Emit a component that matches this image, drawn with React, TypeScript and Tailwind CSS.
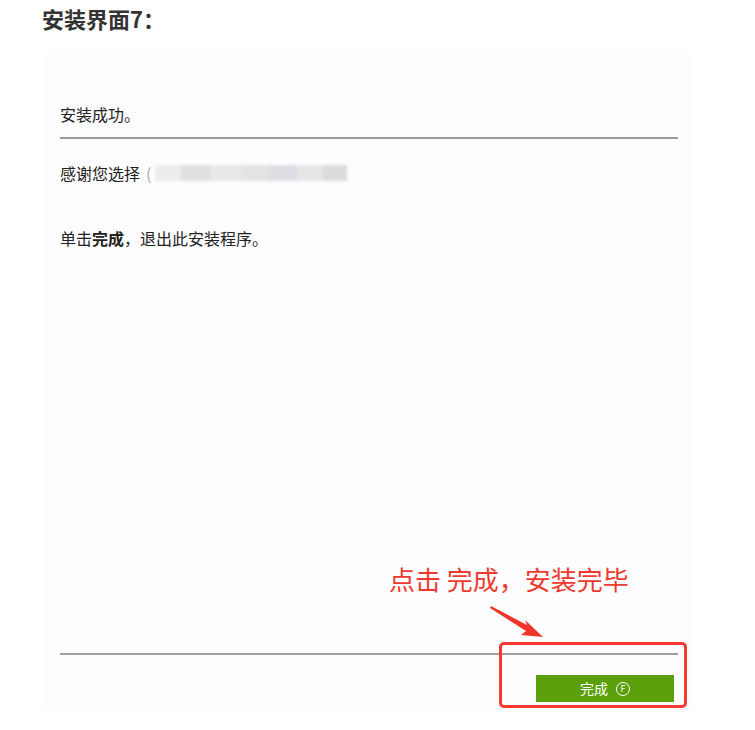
import React from 'react';

const cjk = { fontFamily: '"Noto Sans CJK SC", "Noto Sans", sans-serif' };

// ── Blurred product name (masked in screenshot) ─────────────────────────────
function BlurredName() {
  const blocks = [
    { w: 26, c: '#ededed' },
    { w: 30, c: '#e0e0e0' },
    { w: 30, c: '#e8e8e8' },
    { w: 28, c: '#e3e3e3' },
    { w: 28, c: '#dddde3' },
    { w: 26, c: '#e6e6e6' },
    { w: 24, c: '#dcdcdc' },
  ];
  return (
    <span className="inline-flex h-[16px] items-stretch blur-[1.5px] ml-[4px]">
      {blocks.map((b, i) => (
        <span key={i} style={{ width: b.w, backgroundColor: b.c }} />
      ))}
    </span>
  );
}

export default function App() {
  return (
    <div className="w-[755px] h-[730px] bg-white relative overflow-hidden" style={cjk}>
      {/* Title */}
      <h2 className="pl-[42px] pt-[3px] h-[52px] text-[22px] leading-[30px] font-bold text-[#333]">
        安装界面7：
      </h2>

      {/* Installer screenshot panel */}
      <div className="ml-[43px] w-[650px] h-[658px] bg-[#fdfcfe] flex flex-col pl-[17px] pr-[15px] pt-[51px] pb-[8px] text-[#222]">
        <p className="text-[16px] leading-[22px]">安装成功。</p>
        <div className="mt-[12px] h-[2px] bg-[#9a9a9a]" />

        <p className="mt-[23px] text-[16px] leading-[22px] flex items-center">
          感谢您选择 <span className="text-[#aaa] ml-[6px]">(</span>
          <BlurredName />
        </p>

        <p className="mt-[43px] text-[16px] leading-[22px]">
          单击<b className="font-bold">完成</b>，退出此安装程序。
        </p>

        <div className="flex-1" />

        <div className="h-[2px] bg-[#a0a0a0]" />
        <div className="mt-[20px] flex justify-end pr-[4px]">
          <button className="w-[138px] h-[27px] bg-[#5b9f0b] text-white text-[14px] flex items-center justify-center gap-[8px]">
            完成
            <span className="w-[14px] h-[14px] rounded-full border border-white text-[9px] leading-none flex items-center justify-center">
              F
            </span>
          </button>
        </div>
      </div>

      {/* Annotation overlays */}
      <div className="absolute left-[389px] top-[561px] text-[26px] leading-[36px] text-[#ee3a2e] whitespace-nowrap">
        点击 完成，安装完毕
      </div>

      <svg className="absolute left-[485px] top-[600px]" width="65" height="42" viewBox="0 0 65 42">
        <polygon points="6,6 42,25 40,20 58,37 36,35 41,31 5,8" fill="#f2352b" />
      </svg>

      <div className="absolute left-[499px] top-[642px] w-[188px] h-[66px] border-[3px] border-[#f23a30] rounded-[5px]" />
    </div>
  );
}
